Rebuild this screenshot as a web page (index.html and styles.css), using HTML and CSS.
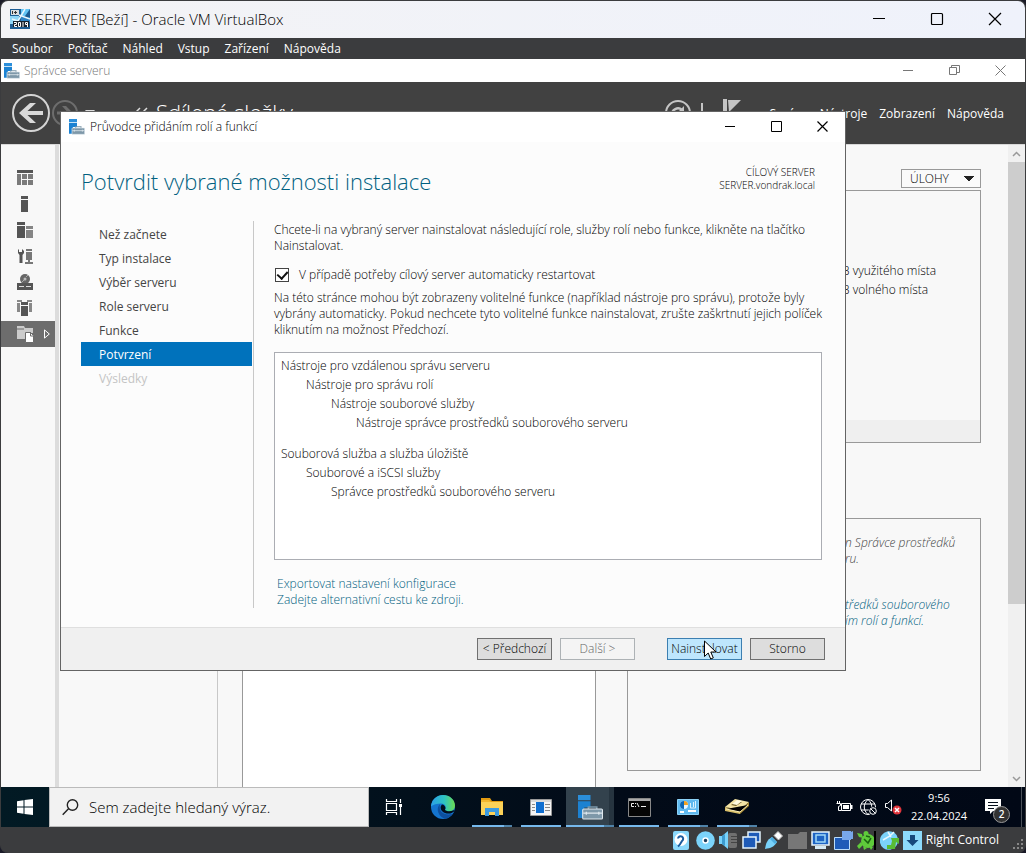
FILE: index.html
```
<!DOCTYPE html>
<html lang="cs">
<head>
<meta charset="utf-8">
<title>SERVER [Beží] - Oracle VM VirtualBox</title>
<link rel="stylesheet" href="styles.css">
</head>
<body>
<svg class="defs" width="0" height="0" aria-hidden="true">
  <symbol id="server-tools" viewBox="0 0 24 24">
    <path fill="#2b8fdb" d="M0 0h12v5H0z"/><path fill="#1c82d2" d="M0 6h12v6H6v10H0z"/>
    <path fill="none" stroke="#7c97a8" stroke-width="1.6" d="M10 13.500v-2h8v2"/>
    <rect x="4.500" y="13.500" width="19" height="9.500" rx="1" fill="#7e98a9" stroke="#dfe8ee"/>
    <path stroke="#dfe8ee" stroke-width="1.200" d="M5 17.500h18M8 16v3M20 16v3"/>
  </symbol>
</svg>
<div class="vm">
  <header class="vm-title">
    <svg class="vm-logo" width="20" height="20" viewBox="0 0 20 20"><rect width="20" height="20" fill="#1b5c93"/><path fill="#8fd6f8" d="M0 7h9v8H0z"/><path fill="#65c6f5" d="M11 0h9l-5 7h-4z"/><path fill="#2c83c5" d="M11 8h9v5h-9z"/><path stroke="#e8f8ff" stroke-width="1.500" d="M15 0L8 12M9 6l11 4M2 10l6 2"/><path fill="#d9dde0" d="M1 1h8v5H1z"/><path stroke="#333" d="M2.500 2v3M5.500 2v3M4 3.500h3"/><path fill="#16222d" d="M3 12h16v6H3z"/><path fill="none" stroke="#fff" d="M4 13.500h2.500v2H4.500v2H7M8.500 13.500h2v4h-2zM13 13v5M17.500 18v-4.500h-2v2h2"/></svg>
    <h1>SERVER [Beží] - Oracle VM VirtualBox</h1>
    <div class="vm-controls">
      <button aria-label="Minimalizovat"><svg width="14" height="14"><path stroke="#000" d="M1 6.500h12"/></svg></button>
      <button aria-label="Maximalizovat"><svg width="14" height="14"><rect x="1.500" y="1.500" width="11" height="11" rx="1" fill="none" stroke="#000" stroke-width="1.200"/></svg></button>
      <button aria-label="Zavřít"><svg width="14" height="14"><path stroke="#000" stroke-width="1.200" d="M1 1l12 12M13 1L1 13"/></svg></button>
    </div>
  </header>
  <nav class="vm-menu">
    <a href="#">Soubor</a><a href="#">Počítač</a><a href="#">Náhled</a><a href="#">Vstup</a><a href="#">Zařízení</a><a href="#">Nápověda</a>
  </nav>

  <main class="guest">
    <section class="manager">
      <header class="win-title muted">
        <svg width="16" height="16"><use href="#server-tools"/></svg>
        <h2>Správce serveru</h2>
        <div class="win-controls">
          <button aria-label="Minimalizovat"><svg width="11" height="11"><path stroke="currentColor" d="M0 5.500h10"/></svg></button>
          <button aria-label="Obnovit"><svg width="11" height="11"><path fill="none" stroke="currentColor" d="M.5 2.500h7v7h-7zM2.500 2.500v-2h8v7h-3"/></svg></button>
          <button aria-label="Zavřít"><svg width="11" height="11"><path stroke="currentColor" d="M.5.5l10 10M10.500.5l-10 10"/></svg></button>
        </div>
      </header>
      <div class="banner">
        <button class="round" aria-label="Zpět"><svg width="38" height="38"><circle cx="19" cy="19" r="18" fill="none" stroke="#d4d4d4" stroke-width="2"/><path fill="#d9d9d9" d="M7 19L18 9h6l-8.500 8H31v4H15.500l8.500 8h-6z"/></svg></button>
        <button class="round" aria-label="Vpřed"><svg width="26" height="26"><circle cx="13" cy="13" r="12" fill="none" stroke="#6d6d6d" stroke-width="2"/><path fill="#6d6d6d" d="M21 13l-7-7h-4l5 5.500H5v3h10L10 20h4z"/></svg></button>
        <svg class="drop" width="10" height="6"><path fill="#ddd" d="M0 0h10L5 6z"/></svg>
        <svg class="chevrons" width="14" height="12"><path fill="none" stroke="#ddd" stroke-width="1.500" d="M6 1L1 6l5 5M13 1L8 6l5 5"/></svg>
        <span class="crumb">Sdílené složky</span>
        <div class="tools">
          <svg width="26" height="26"><circle cx="13" cy="13" r="12" fill="none" stroke="#c4c4c4" stroke-width="2"/><path fill="none" stroke="#c4c4c4" stroke-width="2.500" d="M7 15a6 6 0 0 1 10-5"/><path fill="#c4c4c4" d="M19 6v7h-7z"/></svg>
          <i class="bar"></i>
          <svg width="18" height="28"><path fill="#c4c4c4" d="M0 0h4v28H0zM5 1h13L6 13z"/></svg>
        </div>
        <nav class="banner-menu"><a href="#">Správa</a><a href="#">Nástroje</a><a href="#">Zobrazení</a><a href="#">Nápověda</a></nav>
      </div>
      <div class="workspace">
        <nav class="rail">
          <a href="#" aria-label="Řídicí panel"><svg width="16" height="16" fill="#7b7b7b"><path fill="#555" d="M0 0h16v3H0z"/><path d="M0 4h4v11H0zM5 4h5v5H5zM11 4h5v5h-5zM5 10h5v5H5zM11 10h5v5h-5z"/></svg></a>
          <a href="#" aria-label="Místní server"><svg width="16" height="16" fill="#555"><path d="M4 0h7v3H4zM4 4h7v12H4z"/></svg></a>
          <a href="#" aria-label="Všechny servery"><svg width="16" height="16" fill="#555"><path d="M0 0h8v3H0zM0 4h8v12H0z"/><path fill="#858585" d="M9 4h7v3H9zM9 8h7v8H9z"/></svg></a>
          <a href="#" aria-label="Diagnostika"><svg width="16" height="16" fill="#555"><path d="M1 2l1-1v3h3V1l2 2v2L5.500 7v8h-3V7L1 5z"/><path fill="#777" d="M9 1h6v2H9zM9 4h6v8H9zM11 12h2v3h-2zM8 14h8v2H8z"/></svg></a>
          <a href="#" aria-label="Úložiště"><svg width="16" height="16" fill="#555"><circle cx="8" cy="5" r="5" fill="#666"/><circle cx="8" cy="5" r="1.500" fill="#bbb"/><path stroke="#aaa" d="M9 3l2-2M5 8l2-2"/><path d="M0 9h16v7H0z"/><path fill="#ddd" d="M2 12h5v1H2zM9 12h5v1H9z"/></svg></a>
          <a href="#" aria-label="Skupiny"><svg width="16" height="16" fill="#555"><path fill="#888" d="M0 0h5v2H0zM0 3h3v9H0zM10 0h5v2h-5zM12 3h3v9h-3z"/><path d="M4 2h7v3H4zM4 6h7v10H4z"/></svg></a>
          <a href="#" class="current" aria-label="Souborová služba"><svg width="17" height="17"><path fill="#ccc" d="M0 0h7l1 2h8v5H9v6H0z"/><path stroke="#6d6d6d" d="M0 3h7"/><path fill="#fff" stroke="#6d6d6d" d="M8.500 6.500h5l3 3v7h-8z"/><path fill="none" stroke="#6d6d6d" d="M13.500 6v4h3"/></svg><svg class="flyout" width="6" height="10"><path fill="none" stroke="#fff" d="M.5.9L5.300 5 .5 9.100z"/></svg></a>
        </nav>
        <div class="subnav"></div>
        <div class="tiles">
          <div class="tile-main"></div>
          <div class="tile-side">
            <select class="tasks" aria-label="Úlohy"><option>ÚLOHY</option></select>
            <section class="panel usage"><p>B využitého místa</p><p>B volného místa</p></section>
            <section class="panel notes"><p>n Správce prostředků<br>ru.</p><a href="#">tředků souborového<br>ím rolí a funkcí.</a></section>
          </div>
        </div>
        <div class="scrollbar">
          <svg width="17" height="17"><path fill="none" stroke="#999" stroke-width="1.500" d="M5 11l3.500-3.500L12 11"/></svg>
          <i class="thumb"></i>
          <svg width="17" height="17"><path fill="none" stroke="#999" stroke-width="1.500" d="M5 7l3.500 3.500L12 7"/></svg>
        </div>
      </div>
    </section>

    <section class="wizard" role="dialog" aria-labelledby="wizard-name">
      <header class="win-title">
        <svg width="16" height="16"><use href="#server-tools"/></svg>
        <h2 id="wizard-name">Průvodce přidáním rolí a funkcí</h2>
        <div class="win-controls">
          <button aria-label="Minimalizovat"><svg width="11" height="11"><path stroke="currentColor" d="M0 5.500h10"/></svg></button>
          <button aria-label="Maximalizovat"><svg width="11" height="11"><path fill="none" stroke="currentColor" d="M.5.5h10v10H.5z"/></svg></button>
          <button aria-label="Zavřít"><svg width="11" height="11"><path stroke="currentColor" stroke-width="1.200" d="M.5.5l10 10M10.500.5l-10 10"/></svg></button>
        </div>
      </header>
      <div class="wizard-head">
        <h3>Potvrdit vybrané možnosti instalace</h3>
        <p>CÍLOVÝ SERVER<br>SERVER.vondrak.local</p>
      </div>
      <div class="wizard-body">
        <nav class="steps">
          <a href="#">Než začnete</a><a href="#">Typ instalace</a><a href="#">Výběr serveru</a><a href="#">Role serveru</a><a href="#">Funkce</a><a href="#" class="active" aria-current="step">Potvrzení</a><a class="off">Výsledky</a>
        </nav>
        <div class="step">
          <p>Chcete-li na vybraný server nainstalovat následující role, služby rolí nebo funkce, klikněte na tlačítko Nainstalovat.</p>
          <label class="restart"><input type="checkbox" checked><span>V případě potřeby cílový server automaticky restartovat</span></label>
          <p>Na této stránce mohou být zobrazeny volitelné funkce (například nástroje pro správu), protože byly vybrány automaticky. Pokud nechcete tyto volitelné funkce nainstalovat, zrušte zaškrtnutí jejich políček kliknutím na možnost Předchozí.</p>
          <div class="selection">
            <ul>
              <li>Nástroje pro vzdálenou správu serveru
                <ul><li>Nástroje pro správu rolí
                  <ul><li>Nástroje souborové služby
                    <ul><li>Nástroje správce prostředků souborového serveru</li></ul></li></ul></li></ul></li>
              <li>Souborová služba a služba úložiště
                <ul><li>Souborové a iSCSI služby
                  <ul><li>Správce prostředků souborového serveru</li></ul></li></ul></li>
            </ul>
          </div>
          <div class="links"><a href="#">Exportovat nastavení konfigurace</a><a href="#">Zadejte alternativní cestu ke zdroji.</a></div>
        </div>
      </div>
      <footer class="wizard-foot">
        <button>&lt; Předchozí</button>
        <button disabled>Další &gt;</button>
        <button class="primary">Nainstalovat<svg class="cursor" width="13" height="21" viewBox="0 0 13 21"><path fill="#fff" stroke="#000" d="M.5 1v15.500l3.700-3.500 2.500 6 2.600-1.100L6.800 12H12z"/></svg></button>
        <button>Storno</button>
      </footer>
    </section>
  </main>

  <div class="taskbar">
    <button class="start" aria-label="Start"><svg width="16" height="16" fill="#fff"><path d="M0 2.200l6.500-.9v6.200H0zM7.500 1.100L16 0v7.500H7.500zM0 8.500h6.500v6.200L0 13.800zM7.500 8.500H16V16l-8.500-1.100z"/></svg></button>
    <label class="search"><svg width="17" height="17"><g fill="none" stroke="#222" stroke-width="1.400"><circle cx="10.500" cy="6" r="5.200"/><path d="M6.500 9.700L.7 15.800"/></g></svg><input type="text" placeholder="Sem zadejte hledaný výraz." aria-label="Hledat"></label>
    <div class="apps">
      <button aria-label="Zobrazení úloh"><svg width="18" height="16"><path fill="none" stroke="#fff" stroke-width="1.200" d="M1.500 4.500h10v7h-10zM1.500 0v2.500h10V0M1.500 16v-2.500h10V16M15.500 0v4M15.500 8v8"/><path fill="#fff" d="M14 5h3v3h-3z"/></svg></button>
      <button aria-label="Edge"><svg width="24" height="24"><defs><linearGradient id="edge-top"><stop stop-color="#2b9fe8"/><stop offset=".55" stop-color="#2ec4c2"/><stop offset="1" stop-color="#6bdc50"/></linearGradient></defs><circle cx="12" cy="12" r="12" fill="#1474cf"/><path fill="url(#edge-top)" d="M0 11C1 4 6 0 12 0c7 0 12 5 12 10.500 0 3.500-2.500 6-6 6-2.500 0-4.500-1-4-2 1.500-1.500 1-6-4-6-4 0-8 1-10 3z"/><path fill="#0d4f9e" d="M9 9c-5 5-1 13 5 14.800 3-.5 6-2.300 7.500-5C15 21 7 18 9 9z"/><path fill="#020e1c" d="M11 9.500c-2.500 2-1.500 7 3 8.500 4 1.200 7 .3 9-1.500 1-1.300.3-1.700-1-1-2.500 1-7 1-8-.8 1.300-1.700 0-4.700-3-5.200z"/></svg></button>
      <button class="run multi" aria-label="Průzkumník"><svg width="22" height="20"><path fill="#e29a10" d="M0 1h9l2 3h11v4H0z"/><path fill="#fcd258" d="M0 5h22v13H0z"/><path fill="#f3b72f" d="M0 3h8l2 2H0z"/><path fill="#3d9be0" d="M4 11h14v8h-4v-4H8v4H4z"/></svg></button>
      <button class="run" aria-label="Aplikace"><svg width="22" height="17"><path fill="#d9d9d9" stroke="#999" d="M.5.5h21v16H.5z"/><path fill="#f4f4f4" d="M1 3h20v13H1z"/><path fill="#0f6ed0" d="M6 3h8v11H6z"/><path stroke="#888" d="M2 5.500h3M2 8.500h3M2 11.500h3M15 5.500h5M15 8.500h5M15 11.500h5"/></svg></button>
      <button class="run multi active" aria-label="Správce serveru"><svg width="25" height="25"><use href="#server-tools"/></svg></button>
      <button class="run" aria-label="Příkazový řádek"><svg width="23" height="19"><path fill="#050505" stroke="#888" d="M.5.5h22v18H.5z"/><path fill="#aaa" d="M1 1h21v2H1z"/><path fill="none" stroke="#eee" d="M6 5.500H3.500v3H6M7.500 5v1M7.500 8v1M9 5l2 4M13 8.500h5"/></svg></button>
      <button class="run multi" aria-label="Ovládací panel"><svg width="22" height="16"><path fill="#5fb9ef" stroke="#8cd2f7" d="M.5.500h21v15H.5z"/><circle cx="7" cy="6" r="4" fill="#e6f6ff"/><path fill="#0b68b7" d="M7 2a4 4 0 0 0 0 8z"/><path fill="#f0a020" d="M7 6V2a4 4 0 0 1 4 4z"/><path fill="none" stroke="#d9f2ff" d="M13.500 4v5h5M16.500 3v5M18.500 2v7"/><path stroke="#fff" stroke-width="2" d="M3 13h4M11 12h8"/></svg></button>
      <button class="run multi" aria-label="Disk"><svg width="24" height="16"><path fill="#f3e3a4" d="M0 8L10 0l14 3-9 8z"/><path fill="#d9bf68" d="M0 8l15 3v4L0 12z"/><path fill="#a98a34" d="M15 11l9-8v4l-9 8z"/><path fill="#6f5a22" d="M6 6l6-4 5 1-6 4z"/><path fill="#fffbe0" d="M7 5l5-4 5 1-5 4z"/><path stroke="#fff2b8" d="M1 10l14 3 8-7"/></svg></button>
    </div>
    <div class="tray">
      <svg width="17" height="12"><path fill="none" stroke="#fff" d="M5.500 2.500h9v7h-9zM3.500 0v2M1.500 0v2M.5 2.500h4v2l-2 1v4h3"/><path fill="#fff" d="M7 4h6v4H7zM15 4h1.500v4H15z"/></svg>
      <svg width="18" height="17"><g fill="none" stroke="#fff"><circle cx="8" cy="8" r="7.500"/><path d="M8 .5C3 5 3 11 8 15.500M8 .5c5 4.500 5 10.500 0 15M1 5h14M1 11h14"/></g><circle cx="13" cy="12" r="4.500" fill="#020b18"/><circle cx="13" cy="12" r="3.300" fill="none" stroke="#fff"/><path stroke="#fff" d="M10.700 9.700l4.600 4.600"/></svg>
      <svg width="17" height="16"><path fill="none" stroke="#fff" d="M.5 4.500h2l4-3.500v11l-4-3.500h-2z"/><circle cx="12" cy="11" r="4.500" fill="#e0353c"/><path stroke="#fff" stroke-width="1.500" d="M10 9l4 4M14 9l-4 4"/></svg>
    </div>
    <p class="clock">9:56<br>22.04.2024</p>
    <button class="notify" aria-label="Oznámení"><svg width="17" height="16"><path fill="#fff" d="M0 0h16v12H8l-3 3v-3H0z"/><path stroke="#06101c" d="M3 3.500h10M3 6.500h10M3 9.500h6"/></svg><span class="badge">2</span></button>
    <i class="show-desktop"></i>
  </div>

  <footer class="vm-status">
    <svg width="19" height="19"><rect width="16" height="19" rx="2" fill="#8bd8fb"/><circle cx="8" cy="8.500" r="6.500" fill="#fff"/><path fill="none" stroke="#1c5c9e" stroke-width="2" d="M5 7.500a2.600 2.600 0 1 1 4 2.500c-1 1-1 3-4 5.500"/></svg>
    <svg width="19" height="19"><circle cx="9.500" cy="9.500" r="9.300" fill="#7bd3fa"/><circle cx="9.500" cy="9.500" r="2.500" fill="#1b3e5c" stroke="#fff" stroke-width="1.500"/></svg>
    <svg width="19" height="19"><rect x="9" y="2" width="9" height="15" rx="2" fill="#707070"/><path stroke="#444" d="M12 5.500h6M12 8.500h6M12 11.500h6"/><path fill="#79d2fa" d="M0 5h3l6-5v18l-6-5H0z"/><path fill="#3d9bd0" d="M3 5l3-2v12l-3-2z"/></svg>
    <svg width="19" height="19"><path fill="#1e5bb8" stroke="#e4f3fd" stroke-width="1.500" d="M6 1h12v10H6z"/><path fill="#1e5bb8" stroke="#e4f3fd" stroke-width="1.500" d="M1 6h13v11H1z"/></svg>
    <svg width="19" height="19"><path fill="#79d2fa" d="M0 18c1-6 2-9 7-12l5 5c-3 5-6 6-12 7z"/><path fill="#4eaee0" d="M5 8l5 5 2-2-5-5z"/><path fill="#fff" stroke="#bbb" d="M9 4.500L13 .5 17.500 5l-4 4z"/></svg>
    <svg width="19" height="19"><path fill="#777" d="M0 3h10l2-2h7v17H0z"/></svg>
    <svg width="19" height="19"><path fill="#1d64c4" stroke="#e9f5fc" stroke-width="1.500" d="M1 1h17v13H1z"/><path fill="none" stroke="#9fd8f7" stroke-width="1.500" d="M5 4h9v7H5z"/><path fill="#d5e9f3" d="M4 15h11v3H4z"/></svg>
    <svg width="19" height="19"><path fill="#1e5bb8" stroke="#b9dcfa" d="M.5 6.500h15v12H.5z"/><path fill="#78a7ea" d="M8 0h9v1l2-1v8h-2v1H8z"/></svg>
    <svg width="19" height="19"><g fill="#5fcb3b"><path d="M0 2l5 1 1 4-4-1zM0 15l4-4 2 3-4 4z"/><ellipse cx="11" cy="10" rx="7" ry="7"/><circle cx="9" cy="2.500" r="2.500"/><path d="M12 15l4 1-2 3zM6 15l4 2-3 2z"/></g><path fill="none" stroke="#196510" stroke-width="1.500" d="M7 8l4 4 3-5M9 5l4 1"/><path stroke="#000" stroke-width="2" d="M18 0v19"/></svg>
    <svg width="19" height="19"><ellipse cx="9" cy="9.500" rx="9" ry="9.500" fill="#7bd3fa" transform="rotate(35 9 9.500)"/><path fill="none" stroke="#e9f8ff" stroke-width="1.500" d="M3 9l7-4 4-4M8 1l3 5"/><path fill="#58bd35" d="M11 7h8v6l-3-2-1 7H7v-4h4l1-4z"/></svg>
    <svg width="19" height="19"><rect width="19" height="19" fill="#8ddafb"/><path fill="#16497c" d="M7 4h5v5h3.500l-6 6-6-6H7z"/></svg>
    <span>Right Control</span>
    <svg class="grip" width="14" height="14" fill="#888"><path d="M10 0h2v2h-2zM6 4h2v2H6zM10 4h2v2h-2zM2 8h2v2H2zM6 8h2v2H6zM10 8h2v2h-2z"/></svg>
  </footer>
</div>
</body>
</html>
```
FILE: styles.css
```
* { box-sizing: border-box; }
body {
  margin: 0;
  background: #1b1b28;
  font: 300 12px/16px "Open Sans", "Noto Sans", sans-serif;
  color: #000;
}
h1, h2, h3, p, ul { margin: 0; padding: 0; font-weight: 300; }
a { color: inherit; text-decoration: none; }
button { border: 0; padding: 0; background: none; font: inherit; color: inherit; }
svg { display: block; flex: none; }
.defs { position: absolute; }

.vm {
  display: flex;
  flex-direction: column;
  min-height: 100vh;
  border: 1px solid #3b3c3e;
  border-bottom: 0;
  border-radius: 8px;
  overflow: hidden;
  background: #3b3c3e;
}
.vm-title {
  display: flex;
  align-items: center;
  gap: 6px;
  height: 37px;
  padding: 0 1px 2px 9px;
  background: linear-gradient(90deg, #f3f3f5, #eff2fb);
}
.vm-title h1 { flex: 1; font-size: 15px; line-height: 20px; }
.vm-controls { display: flex; }
.vm-controls button { display: grid; place-items: center; width: 58px; height: 34px; }
.vm-menu {
  display: flex;
  align-items: center;
  gap: 15px;
  height: 21px;
  padding-left: 11px;
  font-weight: 400;
  color: #fff;
}

.guest { flex: 1; display: flex; position: relative; overflow: hidden; }
.manager { flex: 1; display: flex; flex-direction: column; background: #f8f8f8; }
.win-title {
  display: flex;
  align-items: center;
  gap: 4px;
  height: 23px;
  padding-left: 3px;
  background: #fff;
}
.win-title h2 { flex: 1; font-size: 12px; line-height: 16px; }
.muted { color: #777; }
.win-controls { display: flex; }
.win-controls button { display: grid; place-items: center; width: 46px; height: 20px; }
.manager .win-controls { padding-right: 2px; }

.banner {
  display: flex;
  align-items: center;
  gap: 8px;
  height: 62px;
  padding: 0 21px 0 11px;
  background: #414141;
  color: #fff;
}
.banner .round + .round { margin-left: -6px; }
.drop { margin: 0 2px 0 -1px; }
.chevrons { margin-left: 29px; }
.crumb { padding-bottom: 2px; font-size: 22px; line-height: 30px; white-space: nowrap; }
.tools { display: flex; align-items: center; gap: 10px; margin-left: auto; padding-right: 20px; }
.bar { width: 2px; height: 20px; background: #c4c4c4; }
.bar + svg { margin-left: 10px; }
.banner-menu { display: flex; gap: 12px; padding-top: 2px; font-weight: 400; }

.workspace { flex: 1; display: flex; border-top: 1px solid #d8d8d8; }
.rail {
  width: 58px;
  padding-top: 20px;
  border-right: 4px solid #dcdcdc;
}
.rail a { display: flex; align-items: center; justify-content: space-between; height: 26px; padding: 0 5px 0 16px; }
.rail .current { background: #6d6d6d; color: #fff; }
.subnav { width: 159px; border-right: 1px solid #c8c8c8; }
.tiles {
  flex: 1;
  display: grid;
  grid-template-columns: repeat(2, minmax(0, 1fr));
  gap: 31px;
  padding: 0 27px 0 24px;
}
.tile-main { border: solid #999; border-width: 0 1px; background: #fff; }
.tile-side { display: flex; flex-direction: column; padding: 24px 0 16px; }
.tasks {
  align-self: flex-end;
  appearance: none;
  width: 80px;
  height: 19px;
  margin-bottom: 2px;
  padding: 0 8px;
  border: 1px solid #999;
  border-radius: 0;
  background:
    linear-gradient(to bottom right, #222 50%, transparent 50%) 67px 6px / 5px 6px no-repeat,
    linear-gradient(to bottom left, #222 50%, transparent 50%) 62px 6px / 5px 6px no-repeat, #fafafa;
  font: inherit;
  color: #000;
}
.panel { border: 1px solid #999; }
.usage {
  height: 253px;
  margin-bottom: 75px;
  padding: 70px 0 0 214px;
  background: linear-gradient(#efefef, #efefef) bottom / 100% 22px no-repeat;
  line-height: 19px;
  white-space: nowrap;
}
.notes { flex: 1; padding: 16px 0 0 217px; font-style: italic; color: #444; white-space: nowrap; }
.notes a { display: block; margin-top: 30px; color: #006080; }
.scrollbar { display: flex; flex-direction: column; width: 17px; background: #f0f0f0; }
.thumb { flex: 0 1 442px; background: #cdcdcd; }
.scrollbar svg:last-child { margin-top: auto; }

.wizard {
  position: absolute;
  left: 59px;
  top: 52px;
  display: flex;
  flex-direction: column;
  width: 786px;
  height: 560px;
  border: 1px solid #646464;
  background: #fcfcfc;
}
.wizard .win-title { gap: 5px; height: 30px; padding-left: 8px; }
.wizard .win-controls { padding-bottom: 2px; }
.wizard-head {
  display: flex;
  align-items: flex-start;
  justify-content: space-between;
  height: 79px;
  padding: 24px 30px 0 20px;
}
.wizard-head h3 { font-size: 22px; line-height: 30px; color: #006080; }
.wizard-head p { font-size: 10px; line-height: 13px; text-align: right; }
.wizard-body { flex: 1; display: flex; padding: 0 23px 19px 20px; }
.steps {
  display: flex;
  flex-direction: column;
  width: 173px;
  padding: 1px 1px 0 0;
  border-right: 1px solid #c8c8c8;
  font-weight: 400;
  line-height: 22px;
  color: #444;
}
.steps a { padding: 2px 0 0 18px; }
.steps .active { background: #0072bc; color: #fff; }
.steps .off { color: #c4c4c4; }
.step { flex: 1; display: flex; flex-direction: column; padding: 1px 0 0 20px; }
.restart { display: flex; align-items: center; gap: 10px; margin: 13px 0 7px; padding-left: 1px; }
.restart input {
  appearance: none;
  display: grid;
  place-items: center;
  width: 14px;
  height: 14px;
  margin: 0;
  border: 1px solid #444;
  background: #fff;
}
.restart input:checked::after {
  content: "";
  width: 5px;
  height: 8px;
  margin-bottom: 2px;
  border: solid #111;
  border-width: 0 2px 2px 0;
  transform: rotate(42deg);
}
.selection {
  flex: 1;
  margin: 14px 0 16px;
  padding: 3px 6px;
  border: 1px solid #abadb3;
  background: #fff;
  line-height: 19px;
}
.selection ul { list-style: none; }
.selection ul ul { padding-left: 25px; }
.selection > ul > li + li { margin-top: 12px; }
.links { display: flex; flex-direction: column; padding-left: 3px; color: #006080; }
.wizard-foot {
  display: flex;
  justify-content: flex-end;
  gap: 8px;
  height: 43px;
  padding: 10px 20px;
  border-top: 1px solid #dfdfdf;
  background: #f0f0f0;
}
.wizard-foot button { position: relative; width: 75px; border: 1px solid #707070; background: #ddd; }
.wizard-foot button:disabled { border-color: #adb2b5; background: #f4f4f4; color: #666; }
.wizard-foot .primary { margin-left: 24px; border-color: #3c7fb1; background: #bee6fd; }
.cursor { position: absolute; left: 36px; top: 1px; }

.taskbar {
  display: flex;
  height: 40px;
  background: linear-gradient(90deg, #021a24, #020b18 60%, #010816);
  color: #fff;
}
.start { display: grid; place-items: center; width: 48px; }
.search {
  display: flex;
  align-items: center;
  gap: 10px;
  width: 320px;
  padding-left: 12px;
  border: 1px solid #bbb;
  background: #f2f2f2;
}
.search input { flex: 1; min-width: 0; border: 0; padding: 0; background: none; font: inherit; font-size: 15px; line-height: 20px; }
.search input::placeholder { color: #000; }
.apps { display: flex; gap: 3px; padding-left: 2px; }
.apps button { display: grid; place-items: center; width: 46px; }
.apps .run { width: 40px; margin: 0 3px; padding-top: 2px; border-bottom: 2px solid #76b9ed; }
.apps .multi { border-image: linear-gradient(90deg, #76b9ed 78%, #4f82a8 0) 1; border-image-width: 0 0 2px; }
.apps .active { width: 48px; margin: 0 -1px; background: linear-gradient(90deg, #33424d 90%, #26343f 0); }
.tray { display: flex; align-items: center; gap: 7px; margin-left: auto; }
.clock { width: 74px; padding-top: 2px; font-size: 11px; font-weight: 400; line-height: 18px; text-align: center; }
.notify { position: relative; display: grid; place-items: center; width: 34px; margin-right: 11px; }
.show-desktop { width: 4px; border-left: 1px solid #4a5058; }
.badge {
  position: absolute;
  right: 0;
  bottom: 4px;
  width: 17px;
  height: 17px;
  border: 1px solid #999;
  border-radius: 50%;
  background: #333;
  font-size: 10px;
  font-weight: 600;
  line-height: 15px;
}
.vm-status {
  display: flex;
  align-items: center;
  justify-content: flex-end;
  gap: 4px;
  height: 26px;
  font-weight: 400;
  color: #fff;
}
.grip { align-self: flex-end; margin-left: 8px; }
```
